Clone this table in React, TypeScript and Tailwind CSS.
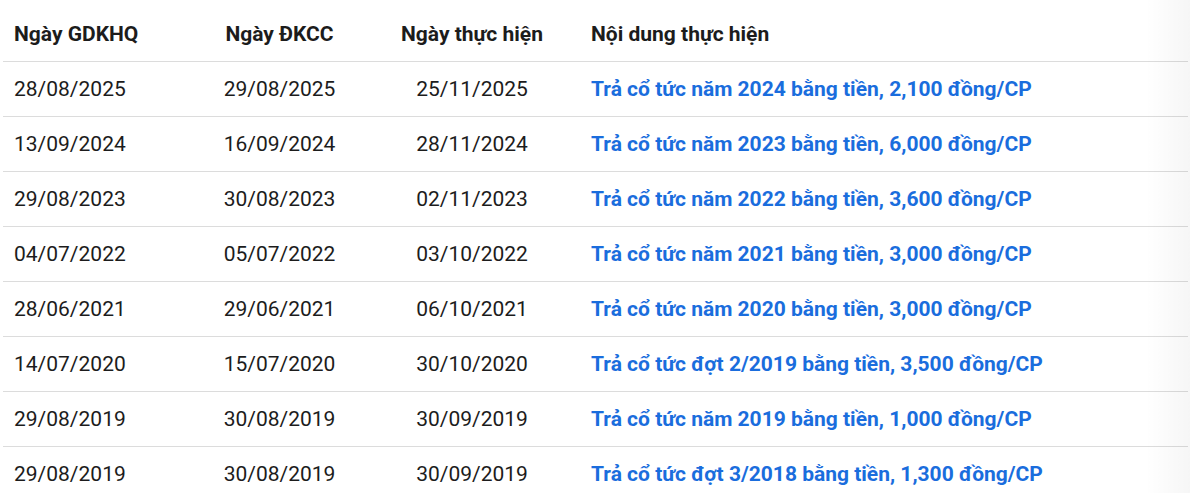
const rows = [
  ["28/08/2025", "29/08/2025", "25/11/2025", "Trả cổ tức năm 2024 bằng tiền, 2,100 đồng/CP"],
  ["13/09/2024", "16/09/2024", "28/11/2024", "Trả cổ tức năm 2023 bằng tiền, 6,000 đồng/CP"],
  ["29/08/2023", "30/08/2023", "02/11/2023", "Trả cổ tức năm 2022 bằng tiền, 3,600 đồng/CP"],
  ["04/07/2022", "05/07/2022", "03/10/2022", "Trả cổ tức năm 2021 bằng tiền, 3,000 đồng/CP"],
  ["28/06/2021", "29/06/2021", "06/10/2021", "Trả cổ tức năm 2020 bằng tiền, 3,000 đồng/CP"],
  ["14/07/2020", "15/07/2020", "30/10/2020", "Trả cổ tức đợt 2/2019 bằng tiền, 3,500 đồng/CP"],
  ["29/08/2019", "30/08/2019", "30/09/2019", "Trả cổ tức năm 2019 bằng tiền, 1,000 đồng/CP"],
  ["29/08/2019", "30/08/2019", "30/09/2019", "Trả cổ tức đợt 3/2018 bằng tiền, 1,300 đồng/CP"],
];

export default function App() {
  return (
    <div
      className="relative min-h-screen bg-white pl-[3px] pr-[2px] text-[#1c1c1c]"
      style={{ fontFamily: "Roboto, 'Noto Sans', sans-serif" }}
    >
      {/* Header */}
      <div className="grid h-[62px] grid-cols-[189px_175px_210px_1fr] items-center border-b border-[#dcdcdc] pt-[8px] text-[21px] font-bold">
        <div className="pl-[11px]">Ngày GDKHQ</div>
        <div className="text-center">Ngày ĐKCC</div>
        <div className="text-center">Ngày thực hiện</div>
        <div className="pl-[14px]">Nội dung thực hiện</div>
      </div>

      {/* Rows */}
      {rows.map((r, i) => (
        <div
          key={i}
          className="grid h-[55px] grid-cols-[189px_175px_210px_1fr] items-center border-b border-[#dcdcdc] pt-[2px] text-[21px]"
        >
          <div className="pl-[11px]">{r[0]}</div>
          <div className="text-center">{r[1]}</div>
          <div className="text-center">{r[2]}</div>
          <div className="pl-[14px] font-bold text-[#1a6ddd]">{r[3]}</div>
        </div>
      ))}

      {/* right scroll shadow */}
      <div className="pointer-events-none absolute top-0 right-0 bottom-0 w-[45px] bg-gradient-to-l from-black/[0.035] to-transparent" />
    </div>
  );
}
